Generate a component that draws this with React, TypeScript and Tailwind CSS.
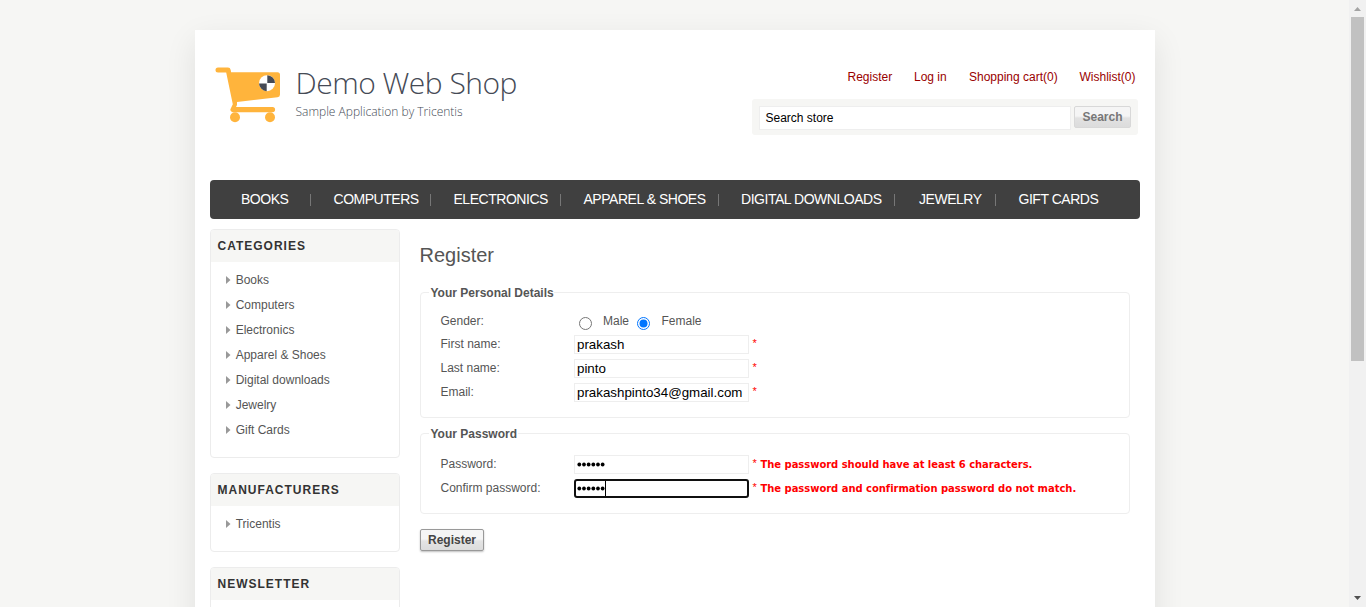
import React from 'react';

const navItems = [
  { label: 'BOOKS', cell: 'w-[92.5px]', text: 'w-[69px]' },
  { label: 'COMPUTERS', cell: 'w-[120px]', text: 'w-[96.5px]' },
  { label: 'ELECTRONICS', cell: 'w-[130px]', text: 'w-[106.5px]' },
  { label: 'APPAREL & SHOES', cell: 'w-[157.5px]', text: 'w-[134.5px]' },
  { label: 'DIGITAL DOWNLOADS', cell: 'w-[178px]', text: 'w-[153px]' },
  { label: 'JEWELRY', cell: 'w-[99.5px]', text: 'w-[76px]' },
  { label: 'GIFT CARDS', cell: 'w-[90px]', text: 'w-[90px]' },
];

const categories = ['Books', 'Computers', 'Electronics', 'Apparel & Shoes', 'Digital downloads', 'Jewelry', 'Gift Cards'];

function Logo() {
  return (
    <div className="flex pt-[30px] pl-[5px]">
      <svg width="66" height="58" viewBox="0 0 66 58" className="mt-[6px] shrink-0">
        <g fill="#ffb43c">
          <path d="M3 1.500h10q2.200 0 2.700 2.400l.4 2.400H62.500q2.500 0 2.500 2.500V28.500q0 2.500-2.500 2.700L22 36v3l-1 2H57.500a2.500 2.500 0 0 1 0 5.200H18a2.500 2.500 0 0 1-2.100-4l1.900-4L11.200 6.500H3a2.450 2.450 0 0 1 0-5z" />
          <circle cx="20" cy="51.300" r="5" />
          <circle cx="55" cy="51.300" r="5" />
        </g>
        <circle cx="52" cy="17.200" r="8" fill="#fff" />
        <path d="M52.300 16.900V9.200a8 8 0 0 1 7.700 7.700zM51.700 17.500v7.700a8 8 0 0 1-7.700-7.700z" fill="#454a55" />
      </svg>
      <div className="ml-[14.500px] whitespace-nowrap font-['Open_Sans'] font-light text-[#454a55]">
        <div className="mt-[3px] text-[30px] leading-[40px] tracking-[-0.5px]">Demo Web Shop</div>
        <div className="text-[12px] leading-[18px]">Sample Application by Tricentis</div>
      </div>
    </div>
  );
}

function SideBlock({ title, items, height }: { title: string; items: string[]; height: string }) {
  return (
    <section className={`${height} mb-[15px] w-[190px] shrink-0 overflow-hidden rounded-[4px] border border-[#ececec]`}>
      <h3 className="h-[32px] bg-[#f6f6f4] pl-[6.500px] pt-px text-[12px] leading-[31px] font-bold tracking-[1px] text-[#333]">{title}</h3>
      <ul className="pt-[5px] pl-[15px]">
        {items.map((item) => (
          <li key={item} className="flex h-[25px] items-center text-[12px] text-[#555]">
            <svg width="5" height="8" viewBox="0 0 5 8" className="mr-[4.700px]">
              <path d="M0 0l4.500 4L0 8z" fill="#999" />
            </svg>
            {item}
          </li>
        ))}
      </ul>
    </section>
  );
}

function Field({ label, value, error, password, focused }: { label: string; value: string; error?: string; password?: boolean; focused?: boolean }) {
  return (
    <div className="flex h-[24px]">
      <span className="w-[133.500px] leading-[18px]">{label}</span>
      <div
        className={`flex h-[19px] w-[175px] items-center text-[13.333px] text-black ${
          focused ? 'rounded-[3px] border-2 border-[#101010] pl-[1px]' : 'border border-[#eee] pl-[2px]'
        }`}
      >
        {password ? (
          <svg width="28" height="5" viewBox="0 0 28 5">
            {value.split('').map((_, i) => (
              <circle key={i} cx={2.3 + i * 4.67} cy="2.500" r="1.900" fill="#000" />
            ))}
          </svg>
        ) : (
          value
        )}
        {focused && <span className="h-[15px] w-px bg-black" />}
      </div>
      <span className="ml-[3.500px] w-[8px] text-[11px] leading-[17px] text-[#f00]">*</span>
      {error && (
        <span className="font-['DejaVu_Sans'] text-[10px] leading-[19px] font-bold tracking-[-0.04px] whitespace-nowrap text-[#f00]">{error}</span>
      )}
    </div>
  );
}

function Group({ title, legendWidth, className, children }: { title: string; legendWidth: string; className: string; children: React.ReactNode }) {
  return (
    <section className={`w-[710px] rounded-[4px] border border-[#eee] pl-[19.500px] ${className}`}>
      <h2 className={`-mt-[8px] -ml-[12px] h-[16px] bg-white pl-[2px] text-[12px] leading-[16px] font-bold whitespace-nowrap ${legendWidth}`}>{title}</h2>
      {children}
    </section>
  );
}

function Radio({ checked }: { checked?: boolean }) {
  return (
    <svg width="13" height="13" viewBox="0 0 13 13" className="mt-[6px] shrink-0">
      <circle cx="6.500" cy="6.500" r="6" fill="#fff" stroke={checked ? '#0075ff' : '#767676'} />
      {checked && <circle cx="6.500" cy="6.500" r="4" fill="#0075ff" />}
    </svg>
  );
}

export default function App() {
  return (
    <div className="flex h-[607px] w-[1366px] overflow-hidden bg-[#f6f6f4] font-['Liberation_Sans',sans-serif] text-[12px] text-[#555]">
      <div className="h-full w-[1349px] overflow-hidden pt-[30px] pl-[195px]">
        <div className="h-[700px] w-[960px] bg-white px-[15px] shadow-[0_10px_30px_rgba(0,0,0,0.09)]">
          <header className="flex h-[150px] justify-between">
            <Logo />
            <div className="flex w-[388px] flex-col pt-[38px]">
              <nav className="flex h-[18px] pl-[95.500px] leading-[18px] whitespace-nowrap text-[#900]">
                <a className="w-[66.500px]">Register</a>
                <a className="w-[55px]">Log in</a>
                <a className="w-[110.500px]">Shopping cart(0)</a>
                <a>Wishlist(0)</a>
              </nav>
              <div className="mt-[13px] flex h-[36px] w-[386px] rounded-[3px] bg-[#f6f6f4] pt-[7px] pl-[7px]">
                <div className="h-[24px] w-[312px] border border-[#eee] bg-white pl-[5.500px] leading-[22px] text-black">Search store</div>
                <div className="ml-[3px] h-[22px] w-[57px] rounded-[2px] border border-[#d8d8d8] bg-linear-to-b from-[#f5f5f5] from-45% via-[#e2e2e2] via-55% to-[#dcdcdc] text-center leading-[20px] font-bold text-[#777]">Search</div>
              </div>
            </div>
          </header>

          <nav className="flex h-[39px] items-center rounded-[4px] bg-[#404040] pl-[31px] text-[14px] tracking-[-0.47px] text-white">
            {navItems.map((item, i) => (
              <div key={item.label} className={`flex items-center whitespace-nowrap ${item.cell}`}>
                <span className={item.text}>{item.label}</span>
                {i < navItems.length - 1 && <span className="mt-px h-[12px] w-px bg-[#777]" />}
              </div>
            ))}
          </nav>

          <div className="flex pt-[10px]">
            <aside className="flex w-[190px] flex-col">
              <SideBlock title="CATEGORIES" items={categories} height="h-[229px]" />
              <SideBlock title="MANUFACTURERS" items={['Tricentis']} height="h-[79px]" />
              <SideBlock title="NEWSLETTER" items={[]} height="h-[160px]" />
            </aside>
            <main className="ml-[20px] w-[710px]">
              <h1 className="-ml-[0.5px] pt-[12px] text-[20px] leading-[28px]">Register</h1>
              <Group title="Your Personal Details" legendWidth="w-[125px]" className="mt-[23px] h-[126px]">
                <div className="mt-[10px] flex h-[24px] leading-[20px]">
                  <span className="w-[138.500px]">Gender:</span>
                  <Radio />
                  <span className="ml-[11px] w-[34px]">Male</span>
                  <Radio checked />
                  <span className="ml-[11.500px]">Female</span>
                </div>
                <Field label="First name:" value="prakash" />
                <Field label="Last name:" value="pinto" />
                <Field label="Email:" value="prakashpinto34@gmail.com" />
              </Group>
              <Group title="Your Password" legendWidth="w-[89px]" className="mt-[15px] h-[81px]">
                <div className="mt-[13px]">
                  <Field label="Password:" value="123456" password error="The password should have at least 6 characters." />
                  <Field label="Confirm password:" value="123456" password focused error="The password and confirmation password do not match." />
                </div>
              </Group>
              <div className="mt-[15px] h-[22px] w-[64px] rounded-[2px] border border-[#999] bg-linear-to-b from-[#f5f5f5] from-45% via-[#e4e4e4] via-55% to-[#dcdcdc] text-center leading-[20px] font-bold text-[#444] shadow-[0_1px_2px_rgba(0,0,0,0.25)]">Register</div>
            </main>
          </div>
        </div>
      </div>
      <div className="flex w-[17px] flex-col items-center bg-[#f1f1f1]">
        <svg width="17" height="17" viewBox="0 0 17 17" className="shrink-0">
          <path d="M5 11h7L8.500 7z" fill="#a3a3a3" />
        </svg>
        <div className="h-[344px] w-[13px] bg-[#c1c1c1]" />
        <svg width="17" height="17" viewBox="0 0 17 17" className="mt-auto shrink-0">
          <path d="M5 6h7L8.500 10z" fill="#505050" />
        </svg>
      </div>
    </div>
  );
}
